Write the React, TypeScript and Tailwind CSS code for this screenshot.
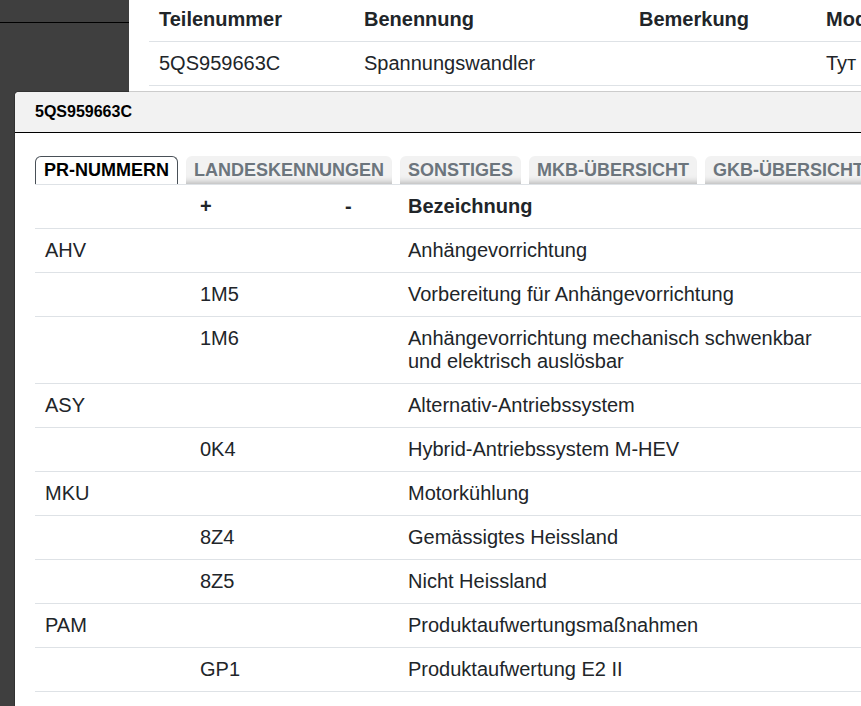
import { useState } from "react";

const tabs = ["PR-NUMMERN", "LANDESKENNUNGEN", "SONSTIGES", "MKB-ÜBERSICHT", "GKB-ÜBERSICHT"];

const prNumbers = [
  { family: "AHV", plus: "", minus: "", label: "Anhängevorrichtung" },
  { family: "", plus: "1M5", minus: "", label: "Vorbereitung für Anhängevorrichtung" },
  { family: "", plus: "1M6", minus: "", label: "Anhängevorrichtung mechanisch schwenkbar und elektrisch auslösbar" },
  { family: "ASY", plus: "", minus: "", label: "Alternativ-Antriebssystem" },
  { family: "", plus: "0K4", minus: "", label: "Hybrid-Antriebssystem M-HEV" },
  { family: "MKU", plus: "", minus: "", label: "Motorkühlung" },
  { family: "", plus: "8Z4", minus: "", label: "Gemässigtes Heissland" },
  { family: "", plus: "8Z5", minus: "", label: "Nicht Heissland" },
  { family: "PAM", plus: "", minus: "", label: "Produktaufwertungsmaßnahmen" },
  { family: "", plus: "GP1", minus: "", label: "Produktaufwertung E2 II" },
];

function PartsTable() {
  return (
    <table className="w-full table-fixed whitespace-nowrap text-left">
      <thead>
        <tr className="border-b border-[#dee2e6]">
          <th className="w-[205px] p-[10px]">Teilenummer</th>
          <th className="w-[275px] p-[10px]">Benennung</th>
          <th className="w-[187px] p-[10px]">Bemerkung</th>
          <th className="p-[10px]">Modell</th>
        </tr>
      </thead>
      <tbody>
        <tr className="border-b border-[#dee2e6]">
          <td className="p-[10px]">5QS959663C</td>
          <td className="p-[10px]">Spannungswandler</td>
          <td className="p-[10px]"></td>
          <td className="p-[10px]">Тут</td>
        </tr>
      </tbody>
    </table>
  );
}

function PrTable() {
  return (
    <table className="w-full table-fixed border-t border-[#dee2e6] text-left">
      <thead>
        <tr className="border-b border-[#dee2e6]">
          <th className="w-[155px] p-[10px]"></th>
          <th className="w-[145px] p-[10px]">+</th>
          <th className="w-[63px] p-[10px]">-</th>
          <th className="py-[10px] pr-5 pl-[10px]">Bezeichnung</th>
        </tr>
      </thead>
      <tbody>
        {prNumbers.map((row) => (
          <tr key={row.label} className="border-b border-[#dee2e6] align-top">
            <td className="p-[10px]">{row.family}</td>
            <td className="p-[10px]">{row.plus}</td>
            <td className="p-[10px]">{row.minus}</td>
            <td className="py-[10px] pr-5 pl-[10px]">{row.label}</td>
          </tr>
        ))}
      </tbody>
    </table>
  );
}

export default function App() {
  const [activeTab, setActiveTab] = useState(tabs[0]);

  return (
    <div className="relative flex h-screen overflow-hidden bg-white font-['Liberation_Sans',Arial,sans-serif] text-[20px] leading-[23px] text-[#212529]">
      <aside className="w-[129px] shrink-0 bg-[#3f3f3f]">
        <div className="h-[23px] border-b border-black"></div>
      </aside>

      <main className="min-w-0 flex-1 pl-5">
        {/* header row sits partly under the top edge */}
        <div className="-mt-[2px]">
          <PartsTable />
        </div>
      </main>

      <div
        role="dialog"
        aria-labelledby="dialog-title"
        className="absolute inset-x-0 top-[91px] bottom-0 ml-[14px] flex flex-col overflow-hidden rounded-tl-[5px] border-t border-l border-black/20 bg-white bg-clip-padding"
      >
        <header className="border-b border-black bg-[#f2f2f2] px-5 py-2">
          <h2 id="dialog-title" className="text-base font-bold text-black">5QS959663C</h2>
        </header>

        <div className="pt-[23px] pl-5">
          <div role="tablist" className="flex gap-2 overflow-hidden whitespace-nowrap">
            {tabs.map((tab) => (
              <button
                key={tab}
                role="tab"
                aria-selected={tab === activeTab}
                onClick={() => setActiveTab(tab)}
                className={
                  tab === activeTab
                    ? "h-7 shrink-0 rounded-t-md border border-b-0 border-[#495057] bg-white px-2 text-[18px] leading-[27px] font-bold text-black"
                    : "h-7 shrink-0 rounded-t-md bg-[#f2f2f2] px-2 text-[18px] leading-[28px] font-bold text-[#6c757d] shadow-[inset_0_-8px_7px_-7px_rgba(0,0,0,0.3)]"
                }
              >
                {tab}
              </button>
            ))}
          </div>
          <PrTable />
        </div>
      </div>
    </div>
  );
}
